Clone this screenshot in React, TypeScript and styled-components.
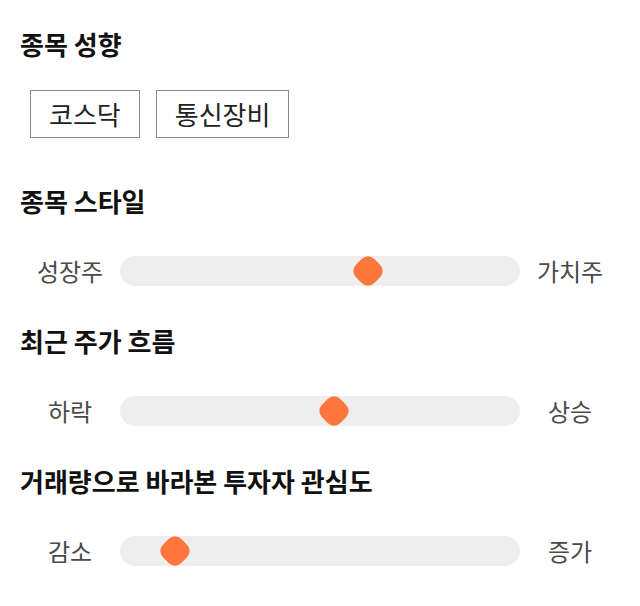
import React from "react";
import styled, { createGlobalStyle } from "styled-components";

const GlobalStyle = createGlobalStyle`
  html, body {
    margin: 0;
    padding: 0;
    background: #ffffff;
  }
  body {
    font-family: "Noto Sans CJK KR", "Noto Sans", sans-serif;
    color: #111111;
  }
`;

const Page = styled.div`
  width: 640px;
  box-sizing: border-box;
  padding: 28px 20px 0;
  display: flex;
  flex-direction: column;
`;

const Section = styled.section<{ $after: number }>`
  display: flex;
  flex-direction: column;
  margin-bottom: ${(p) => p.$after}px;
`;

const Heading = styled.h2<{ $below: number }>`
  margin: 0 0 ${(p) => p.$below}px;
  font-size: 26px;
  line-height: 32px;
  font-weight: 700;
  color: #111111;
  letter-spacing: 0;
`;

const ChipRow = styled.div`
  display: flex;
  gap: 16px;
  padding-left: 10px;
`;

const Chip = styled.button`
  box-sizing: border-box;
  height: 48px;
  padding: 0 18px;
  border: 1px solid #8a8a8a;
  border-radius: 0;
  background: #ffffff;
  font-family: "Noto Sans CJK KR", "Noto Sans", sans-serif;
  font-size: 26px;
  line-height: 46px;
  color: #222222;
  cursor: pointer;
`;

const SliderRow = styled.div`
  display: grid;
  grid-template-columns: 100px 400px 100px;
  align-items: center;
  height: 30px;
`;

const EndLabel = styled.span`
  text-align: center;
  font-size: 24px;
  line-height: 30px;
  color: #4a4a4a;
`;

const Track = styled.div`
  position: relative;
  height: 30px;
  border-radius: 15px;
  background: #eeeeee;
`;

const Thumb = styled.div`
  position: absolute;
  top: 50%;
  width: 26px;
  height: 26px;
  border-radius: 9px;
  background: #ff773d;
  transform: translate(-50%, -50%) rotate(45deg);
`;

type SliderSpec = {
  title: string;
  left: string;
  right: string;
  value: number;
};

const sliders: SliderSpec[] = [
  { title: "종목 스타일", left: "성장주", right: "가치주", value: 62 },
  { title: "최근 주가 흐름", left: "하락", right: "상승", value: 53.5 },
  { title: "거래량으로 바라본 투자자 관심도", left: "감소", right: "증가", value: 13.75 },
];

export default function App() {
  return (
    <>
      <GlobalStyle />
      <Page>
        <Section $after={47}>
          <Heading $below={30}>종목 성향</Heading>
          <ChipRow>
            <Chip>코스닥</Chip>
            <Chip>통신장비</Chip>
          </ChipRow>
        </Section>
        {sliders.map((s) => (
          <Section key={s.title} $after={39}>
            <Heading $below={39}>{s.title}</Heading>
            <SliderRow>
              <EndLabel>{s.left}</EndLabel>
              <Track>
                <Thumb style={{ left: `${s.value}%` }} />
              </Track>
              <EndLabel>{s.right}</EndLabel>
            </SliderRow>
          </Section>
        ))}
      </Page>
    </>
  );
}
